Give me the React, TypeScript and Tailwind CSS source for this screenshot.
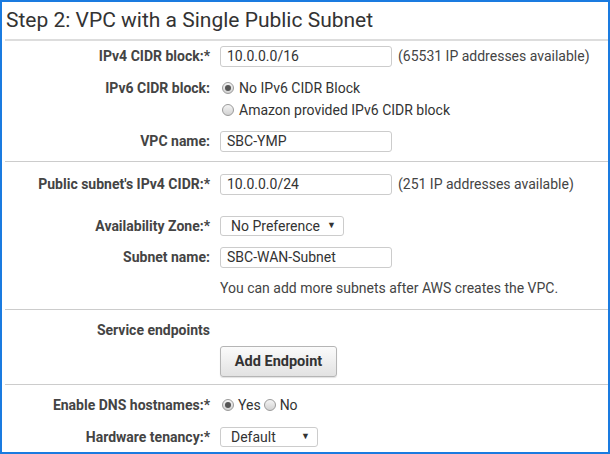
import React from 'react';

const font = { fontFamily: 'Roboto, "Liberation Sans", sans-serif' };

function Label({ children }: { children: React.ReactNode }) {
  return (
    <div className="w-[205px] shrink-0 text-right text-[14px] font-bold text-[#444]">
      {children}
    </div>
  );
}

function TextBox({ value }: { value: string }) {
  return (
    <div className="flex h-[21px] w-[172px] items-center rounded-[3px] border border-[#ccc] bg-white pl-[6px] text-[14px] text-[#333]">
      {value}
    </div>
  );
}

function Select({ value, width }: { value: string; width: string }) {
  return (
    <div
      className={`flex h-[20px] ${width} items-center justify-between rounded-[3px] border border-[#ccc] bg-white pl-[10px] pr-[7px] text-[14px] text-[#333]`}
    >
      <span>{value}</span>
      <span className="text-[9px] text-[#333]">▼</span>
    </div>
  );
}

function Radio({ checked }: { checked?: boolean }) {
  return (
    <span className="flex h-[12px] w-[12px] shrink-0 items-center justify-center rounded-full border border-[#9a9a9a] bg-gradient-to-b from-[#f4f4f4] to-[#d2d2d2]">
      {checked && <span className="h-[6px] w-[6px] rounded-full bg-[#555]" />}
    </span>
  );
}

function Row({ className = '', children }: { className?: string; children: React.ReactNode }) {
  return <div className={`flex items-center gap-[10px] ${className}`}>{children}</div>;
}

export default function App() {
  return (
    <div style={font} className="h-[454px] w-[610px] border-2 border-[#1a7be0] bg-white pl-[3px]">
      <div className="flex h-[37px] items-center pl-[1px] text-[21px] text-[#333]">
        Step 2: VPC with a Single Public Subnet
      </div>
      <div className="h-[2px] bg-[#ddd]" />

      <div className="border-b border-[#ccc] pt-[5px] pb-[9px]">
        <Row className="h-[21px]">
          <Label>IPv4 CIDR block:*</Label>
          <TextBox value="10.0.0.0/16" />
          <span className="ml-[-4px] text-[14px] text-[#444]">(65531 IP addresses available)</span>
        </Row>
        <div className="mt-[10px] flex gap-[10px]">
          <div className="flex h-[22px] items-center">
            <Label>IPv6 CIDR block:</Label>
          </div>
          <div className="text-[14px] text-[#333]">
            <div className="flex h-[22px] items-center gap-[5px] pl-[2px]">
              <Radio checked />
              <span>No IPv6 CIDR Block</span>
            </div>
            <div className="flex h-[22px] items-center gap-[5px] pl-[2px]">
              <Radio />
              <span>Amazon provided IPv6 CIDR block</span>
            </div>
          </div>
        </div>
        <Row className="mt-[10px] h-[21px]">
          <Label>VPC name:</Label>
          <TextBox value="SBC-YMP" />
        </Row>
      </div>

      <div className="border-b border-[#ccc] pt-[12px] pb-[11px]">
        <Row className="h-[21px]">
          <Label>Public subnet's IPv4 CIDR:*</Label>
          <TextBox value="10.0.0.0/24" />
          <span className="ml-[-4px] text-[14px] text-[#444]">(251 IP addresses available)</span>
        </Row>
        <Row className="mt-[21px] h-[20px]">
          <Label>Availability Zone:*</Label>
          <Select value="No Preference" width="w-[124px]" />
        </Row>
        <Row className="mt-[11px] h-[21px]">
          <Label>Subnet name:</Label>
          <TextBox value="SBC-WAN-Subnet" />
        </Row>
        <Row className="mt-[10px] h-[20px]">
          <div className="w-[205px] shrink-0" />
          <span className="text-[14px] text-[#444]">You can add more subnets after AWS creates the VPC.</span>
        </Row>
      </div>

      <div className="border-b border-[#ccc] pt-[10px] pb-[7px]">
        <Row className="h-[20px]">
          <Label>Service endpoints</Label>
        </Row>
        <Row className="mt-[6px]">
          <div className="w-[205px] shrink-0" />
          <button className="h-[31px] w-[117px] rounded-[3px] border border-[#b5b5b5] bg-gradient-to-b from-[#fbfbfb] to-[#e2e2e2] text-[14.5px] font-bold text-[#333] shadow-[0_1px_1px_rgba(0,0,0,0.12)]">
            Add Endpoint
          </button>
        </Row>
      </div>

      <div className="pt-[10px]">
        <Row className="h-[20px]">
          <Label>Enable DNS hostnames:*</Label>
          <div className="flex items-center pl-[2px] text-[14px] text-[#333]">
            <Radio checked />
            <span className="ml-[4px]">Yes</span>
            <span className="ml-[3px]">
              <Radio />
            </span>
            <span className="ml-[4px]">No</span>
          </div>
        </Row>
        <Row className="mt-[12px] h-[20px]">
          <Label>Hardware tenancy:*</Label>
          <Select value="Default" width="w-[98px]" />
        </Row>
      </div>
    </div>
  );
}
